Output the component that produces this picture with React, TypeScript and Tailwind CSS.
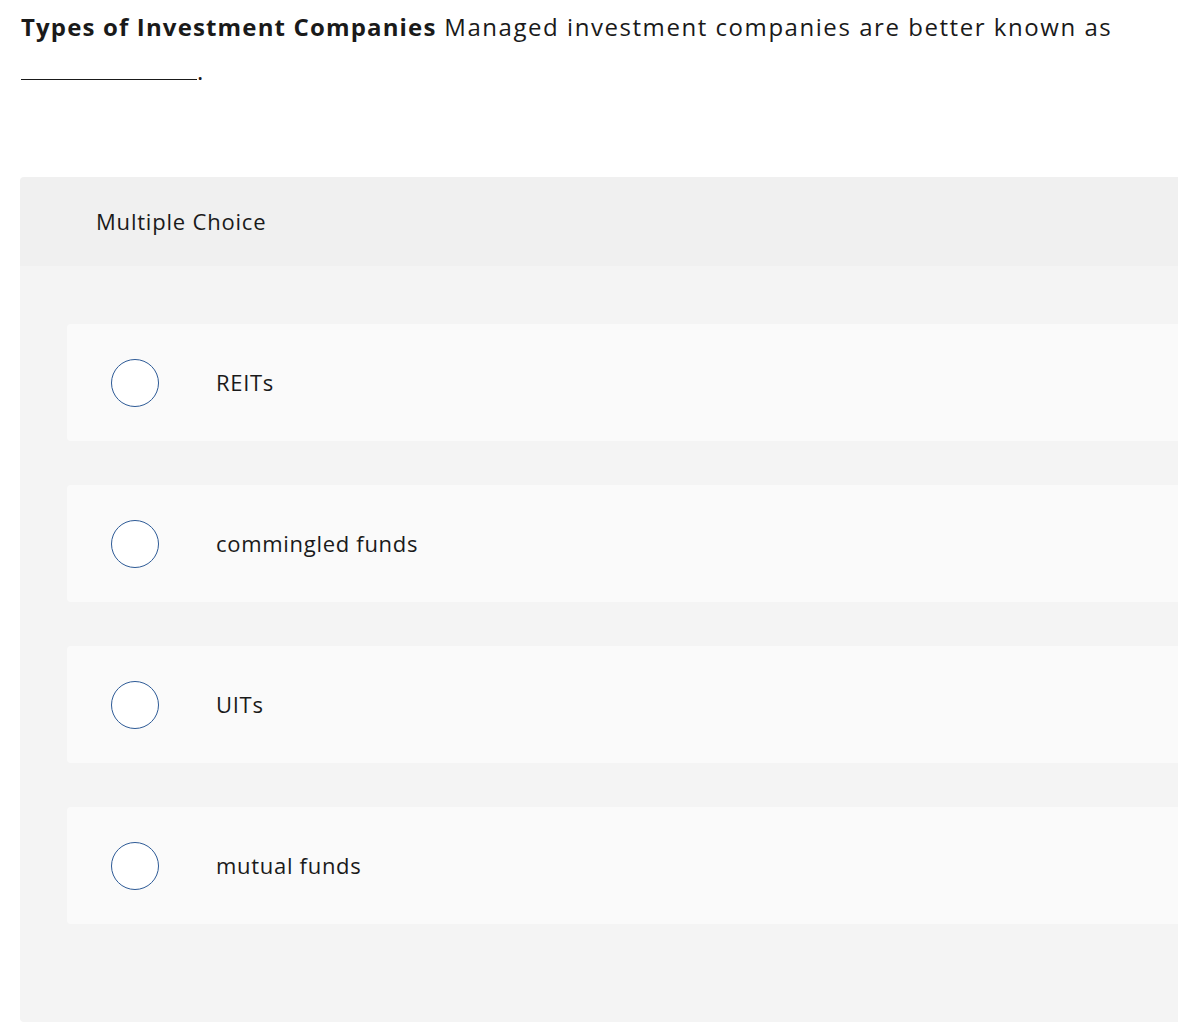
import { useState } from 'react';

const options = ['REITs', 'commingled funds', 'UITs', 'mutual funds'];

export default function App() {
    const [picked, setPicked] = useState<number | null>(null);

    return (
        <div className="min-h-[1034px] bg-white overflow-hidden text-[#1a1a1a]" style={{ fontFamily: '"Open Sans", Lato, sans-serif' }}>
            <div className="pl-[21px] pt-[5px] pr-4 text-[24px] leading-[44px] tracking-[1.55px]">
                <span className="font-bold tracking-[1.15px]">Types of Investment Companies</span> Managed investment companies are better known as{' '}
                <span className="inline-block w-[176px] border-b border-[#1a1a1a] align-baseline" />.
            </div>
            <div className="ml-[20px] mt-[84px] w-[1200px] rounded-l-[4px] overflow-hidden">
                <div className="h-[89px] bg-[#f0f0f0] flex items-center pl-[76px] text-[22px] tracking-[0.8px]">Multiple Choice</div>
                <div className="bg-[#f4f4f4] pt-[58px] pb-[98px] pl-[47px] flex flex-col gap-[44px]">
                    {options.map((o, i) => (
                        <button key={o} onClick={() => setPicked(i)} className="h-[117px] bg-[#fafafa] rounded-l-[4px] flex items-center pl-[44px] text-left">
                            <span className="w-[48px] h-[48px] rounded-full border border-[#2d5a96] bg-white flex items-center justify-center shrink-0">
                                {picked === i && <span className="w-[24px] h-[24px] rounded-full bg-[#2d5a96]" />}
                            </span>
                            <span className="ml-[57px] text-[22px] tracking-[0.7px]">{o}</span>
                        </button>
                    ))}
                </div>
            </div>
        </div>
    );
}
